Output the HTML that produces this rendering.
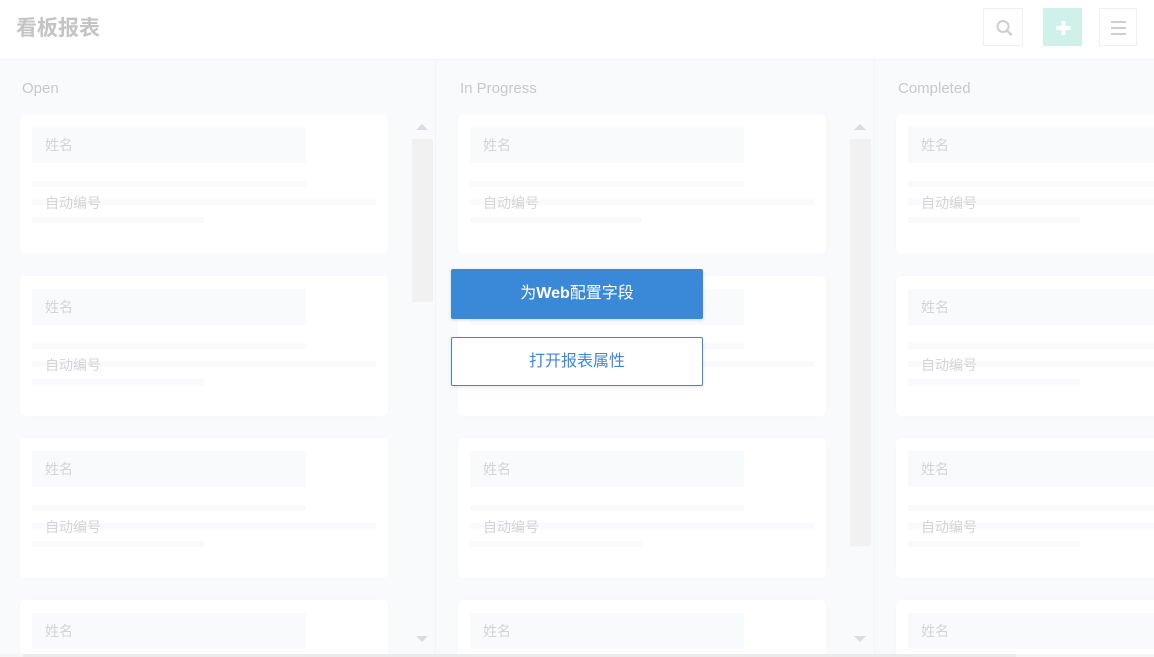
<!DOCTYPE html>
<html><head><meta charset="utf-8"><style>
*{margin:0;padding:0;box-sizing:border-box}
html{width:1154px;height:657px;overflow:hidden}
body{width:1154px;height:657px;overflow:hidden;background:#f9fafc;font-family:"Liberation Sans","Noto Sans CJK SC",sans-serif;position:relative}
.wrap{position:absolute;left:0;top:0;width:1154px;height:654px;overflow:hidden}
.hdr{position:absolute;left:0;top:0;width:1154px;height:60px;background:#fff;border-bottom:1px solid #f1f2f4}
.title{position:absolute;left:16px;top:12px;font-size:21px;font-weight:bold;color:#c4c4c4}
.ib{position:absolute;top:8px;width:40px;height:38px;border:1px solid #f0f0f0;background:#fff}
.col{position:absolute;top:80px;font-size:15px;color:#c8c8c8}
.sep{position:absolute;top:60px;width:1px;height:597px;background:#f3f4f6}
.card{position:absolute;width:368px;height:140px;background:#fff;border-radius:5px;box-shadow:0 0 2px rgba(0,0,0,.02)}
.nb{position:absolute;left:12px;top:13px;width:274px;height:36px;background:#f9fafc}
.lab{position:absolute;font-size:14px;color:#d4d4d4}
.ln{position:absolute;left:12px;height:6px;background:#f9fafc}
.track{position:absolute;width:21px;background:#f1f1f1}
.up{position:absolute;width:0;height:0;border-left:6px solid transparent;border-right:6px solid transparent;border-bottom:6px solid #dcdcdc}
.dn{position:absolute;width:0;height:0;border-left:6px solid transparent;border-right:6px solid transparent;border-top:6px solid #dcdcdc}
.b1{position:absolute;left:451px;top:269px;width:252px;height:50px;background:#3a88d8;border-radius:2px;color:#fff;font-size:16px;text-align:center;line-height:50px;box-shadow:0 1px 3px rgba(0,0,0,.15)}
.b2{position:absolute;left:451px;top:337px;width:252px;height:49px;background:#fff;border:1px solid #3a88d8;border-radius:2px;color:#3a88d8;font-size:16px;text-align:center;line-height:47px;box-shadow:0 1px 3px rgba(0,0,0,.1)}
</style></head><body>
<div class="wrap">
<div class="col" style="left:22px">Open</div>
<div class="col" style="left:460px">In Progress</div>
<div class="col" style="left:898px">Completed</div>
<div class="sep" style="left:435px"></div>
<div class="sep" style="left:874px"></div>

<div class="card" style="left:20px;top:114px"><div class="nb"></div><div class="lab" style="left:25px;top:21px">姓名</div><div class="ln" style="top:67px;width:274px"></div><div class="ln" style="top:85px;width:344px"></div><div class="ln" style="top:103px;width:172px"></div><div class="lab" style="left:25px;top:79px">自动编号</div></div>
<div class="card" style="left:20px;top:276px"><div class="nb"></div><div class="lab" style="left:25px;top:21px">姓名</div><div class="ln" style="top:67px;width:274px"></div><div class="ln" style="top:85px;width:344px"></div><div class="ln" style="top:103px;width:172px"></div><div class="lab" style="left:25px;top:79px">自动编号</div></div>
<div class="card" style="left:20px;top:438px"><div class="nb"></div><div class="lab" style="left:25px;top:21px">姓名</div><div class="ln" style="top:67px;width:274px"></div><div class="ln" style="top:85px;width:344px"></div><div class="ln" style="top:103px;width:172px"></div><div class="lab" style="left:25px;top:79px">自动编号</div></div>
<div class="card" style="left:20px;top:600px"><div class="nb"></div><div class="lab" style="left:25px;top:21px">姓名</div></div>

<div class="card" style="left:458px;top:114px"><div class="nb"></div><div class="lab" style="left:25px;top:21px">姓名</div><div class="ln" style="top:67px;width:274px"></div><div class="ln" style="top:85px;width:344px"></div><div class="ln" style="top:103px;width:172px"></div><div class="lab" style="left:25px;top:79px">自动编号</div></div>
<div class="card" style="left:458px;top:276px"><div class="nb"></div><div class="lab" style="left:25px;top:21px">姓名</div><div class="ln" style="top:67px;width:274px"></div><div class="ln" style="top:85px;width:344px"></div><div class="ln" style="top:103px;width:172px"></div><div class="lab" style="left:25px;top:79px">自动编号</div></div>
<div class="card" style="left:458px;top:438px"><div class="nb"></div><div class="lab" style="left:25px;top:21px">姓名</div><div class="ln" style="top:67px;width:274px"></div><div class="ln" style="top:85px;width:344px"></div><div class="ln" style="top:103px;width:172px"></div><div class="lab" style="left:25px;top:79px">自动编号</div></div>
<div class="card" style="left:458px;top:600px"><div class="nb"></div><div class="lab" style="left:25px;top:21px">姓名</div></div>

<div class="card" style="left:896px;top:114px"><div class="nb"></div><div class="lab" style="left:25px;top:21px">姓名</div><div class="ln" style="top:67px;width:274px"></div><div class="ln" style="top:85px;width:344px"></div><div class="ln" style="top:103px;width:172px"></div><div class="lab" style="left:25px;top:79px">自动编号</div></div>
<div class="card" style="left:896px;top:276px"><div class="nb"></div><div class="lab" style="left:25px;top:21px">姓名</div><div class="ln" style="top:67px;width:274px"></div><div class="ln" style="top:85px;width:344px"></div><div class="ln" style="top:103px;width:172px"></div><div class="lab" style="left:25px;top:79px">自动编号</div></div>
<div class="card" style="left:896px;top:438px"><div class="nb"></div><div class="lab" style="left:25px;top:21px">姓名</div><div class="ln" style="top:67px;width:274px"></div><div class="ln" style="top:85px;width:344px"></div><div class="ln" style="top:103px;width:172px"></div><div class="lab" style="left:25px;top:79px">自动编号</div></div>
<div class="card" style="left:896px;top:600px"><div class="nb"></div><div class="lab" style="left:25px;top:21px">姓名</div></div>

<div class="up" style="left:416px;top:124px"></div>
<div class="track" style="left:412px;top:139px;height:163px"></div>
<div class="dn" style="left:416px;top:636px"></div>
<div class="up" style="left:854px;top:124px"></div>
<div class="track" style="left:850px;top:139px;height:407px"></div>
<div class="dn" style="left:854px;top:636px"></div>
</div>
<div style="position:absolute;left:0;top:654px;width:1154px;height:3px;background:#f5f5f5"></div>
<div style="position:absolute;left:23px;top:654px;width:993px;height:3px;background:#ebebeb"></div>

<div class="hdr">
<div class="title">看板报表</div>
<div class="ib" style="left:983px"><svg width="40" height="38" viewBox="0 0 40 38"><circle cx="19" cy="17.5" r="5.5" fill="none" stroke="#cfcfcf" stroke-width="2"/><line x1="23" y1="21.5" x2="27" y2="25.5" stroke="#cfcfcf" stroke-width="2.4" stroke-linecap="round"/></svg></div>
<div class="ib" style="left:1043px;width:39px;background:#d0f0ea;border-color:#d0f0ea"><svg width="39" height="38" viewBox="0 0 39 38"><rect x="17.5" y="12" width="4" height="14" fill="#fff"/><rect x="12.5" y="17" width="14" height="4" fill="#fff"/></svg></div>
<div class="ib" style="left:1099px;width:38px"><svg width="38" height="38" viewBox="0 0 38 38"><rect x="11" y="12" width="15" height="2" fill="#cfcfcf"/><rect x="11" y="18" width="15" height="2" fill="#cfcfcf"/><rect x="11" y="24" width="15" height="2" fill="#cfcfcf"/></svg></div>
</div>

<div class="b1">为<b>Web</b>配置字段</div>
<div class="b2">打开报表属性</div>
</body></html>
